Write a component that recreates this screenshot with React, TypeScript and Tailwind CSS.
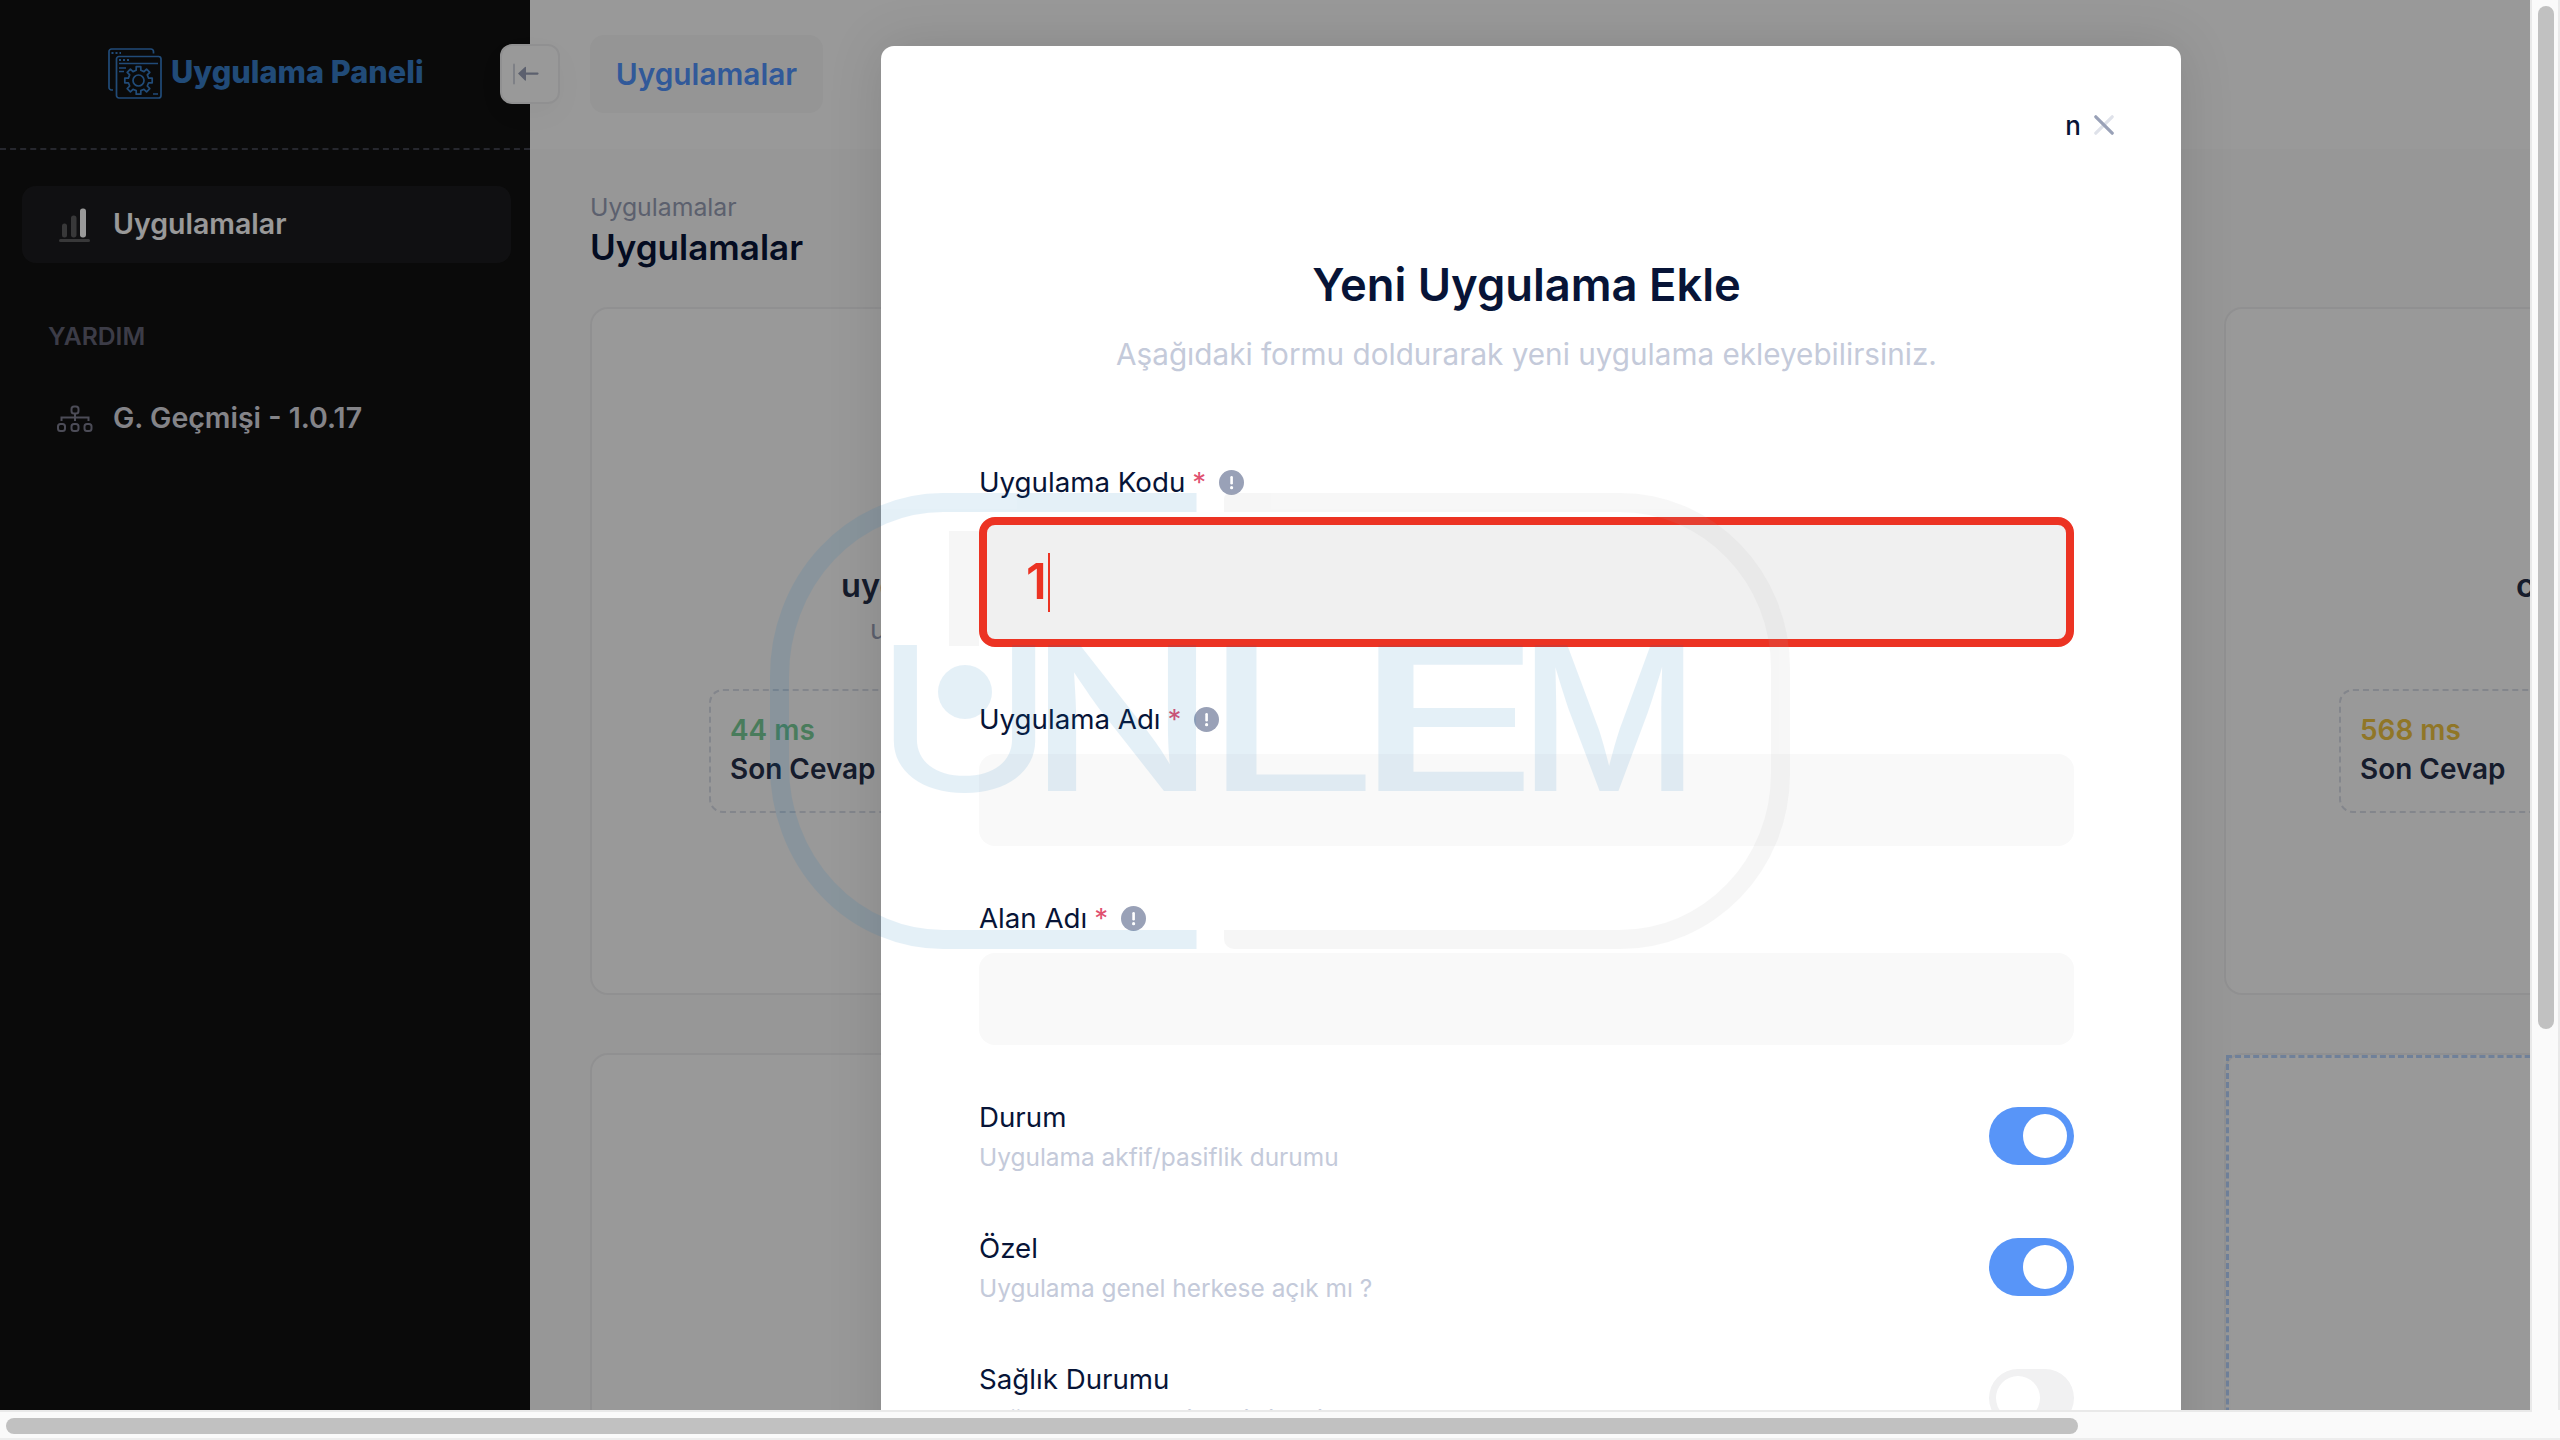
import React from "react";

function LogoIcon() {
  return (
    <svg width="54" height="51" viewBox="0 0 54 51" fill="none" stroke="#377ec9" strokeWidth="1.7" className="shrink-0">
      <path d="M5 42H3.500A2.500 2.500 0 0 1 1 39.500V3.500A2.500 2.500 0 0 1 3.500 1H43A2.500 2.500 0 0 1 45.500 3.500V5.500" />
      <rect x="8.500" y="8.500" width="44.500" height="41.500" rx="2.500" />
      <path d="M3.500 5H13" strokeDasharray="2 2" strokeWidth="2" />
      <path d="M11 12H21" strokeDasharray="2 2" strokeWidth="2" />
      <path d="M11 15.500H50M11 20H18M11 23.500H16M45 46H50" />
      <circle cx="30.500" cy="32.500" r="5.500" />
      <path strokeLinejoin="round" d="M28.200 18.700h4.600v3.600l3.200 1.300 2.600-2.500 3.200 3.200-2.500 2.600 1.300 3.200h3.600v4.700h-3.600l-1.300 3.200 2.500 2.600-3.200 3.200-2.600-2.500-3.200 1.300v3.600h-4.600v-3.600l-3.200-1.300-2.600 2.500-3.200-3.200 2.500-2.600-1.300-3.200h-3.600v-4.700h3.600l1.300-3.200-2.500-2.600 3.200-3.200 2.600 2.500 3.200-1.300z" />
    </svg>
  );
}

function Sidebar() {
  return (
    <aside className="flex h-full w-[530px] shrink-0 flex-col bg-[#111111]">
      <div className="flex h-[150px] items-start border-b-2 border-dashed border-[#40414d] pl-[108px] pt-[48px]">
        <LogoIcon />
        <span className="ml-[9px] mt-[5px] text-[30.700px] font-extrabold leading-[38px] text-[#377ec9]">Uygulama Paneli</span>
      </div>
      <nav className="flex flex-col px-[22px] pt-[36px]">
        <a className="flex h-[77px] w-[489px] items-center rounded-[14px] bg-[#1c1c1f] pl-[37px]">
          <svg width="32" height="34" viewBox="0 0 32 34">
            <rect x="3" y="15.500" width="5" height="14" rx="2.500" fill="#5e5e60" />
            <rect x="12" y="7.500" width="5.500" height="22" rx="2.700" fill="#5e5e60" />
            <rect x="21" y="0.500" width="6" height="29" rx="2.700" fill="#ffffff" />
            <rect x="0" y="31" width="31" height="3" rx="1.500" fill="#5e5e60" />
          </svg>
          <span className="ml-[22px] text-[28.500px] font-semibold text-white">Uygulamalar</span>
        </a>
        <div className="mt-[55px] pl-[26px] text-[24.700px] font-semibold leading-[37px] text-[#646477]">YARDIM</div>
        <a className="mt-[25px] flex h-[77px] items-center pl-[35px]">
          <svg width="36" height="28" viewBox="0 0 36 28" fill="none" stroke="#7f7f92" strokeWidth="2">
            <rect x="14.500" y="1.500" width="7" height="7" rx="2.500" />
            <rect x="1" y="19" width="7" height="7" rx="2.500" />
            <rect x="14.500" y="19" width="7" height="7" rx="2.500" />
            <rect x="27.500" y="19" width="7" height="7" rx="2.500" />
            <path d="M4.500 16v-3.500h27V16M18 9v7" />
          </svg>
          <span className="ml-[20px] text-[28.500px] font-semibold text-[#dcdce3]">G. Geçmişi - 1.0.17</span>
        </a>
      </nav>
    </aside>
  );
}

type CardProps = { title: string; titleClass: string; code: string; ms: string; tone: string; boxClass: string };

function AppCard({ title, titleClass, code, ms, tone, boxClass }: CardProps) {
  return (
    <div className="flex h-[688px] w-[716px] shrink-0 flex-col rounded-[18px] border-2 border-[#f1f1f2] bg-white pt-[253px]">
      <div className={"flex h-[48px] items-center whitespace-nowrap text-[32.500px] font-semibold text-[#252f4a] " + titleClass}>{title}</div>
      <div className="ml-[278px] flex h-[40px] items-center whitespace-nowrap text-[27px] text-[#99a1b7]">{code}</div>
      <div className={"mt-[39px] flex " + boxClass}>
        <div className="flex h-[124px] w-[230px] flex-col rounded-[14px] border-2 border-dashed border-[#dbdfe9] pl-[19px] pt-[20px]">
          <span className={"text-[27.950px] font-semibold leading-[39px] " + tone}>{ms}</span>
          <span className="whitespace-nowrap text-[27.950px] font-semibold leading-[39px] text-[#252f4a]">Son Cevap</span>
        </div>
      </div>
    </div>
  );
}

function Page() {
  return (
    <div className="relative flex h-full w-full">
      <Sidebar />
      <div className="absolute left-[500px] top-[44px] z-10 flex h-[60px] w-[60px] items-center rounded-[12px] border-2 border-[#f1f1f2] bg-white pl-[11px] shadow-[0_10px_30px_rgba(0,0,0,0.03)]">
        <svg width="26" height="22" viewBox="0 0 26 22">
          <rect x="0" y="0.500" width="2" height="21" rx="1" fill="#d3d6e0" />
          <path d="M5 10.500L12 4q1-.5 1 .5V9.500h11.500a1 1 0 0 1 0 2.200H13V17q0 1-1 .5z" fill="#99a1b7" />
        </svg>
      </div>
      <div className="flex min-w-0 flex-1 flex-col overflow-hidden bg-[#fcfcfc]">
        <header className="flex h-[149px] shrink-0 bg-white pl-[60px] pt-[35px]">
          <div className="flex h-[78px] w-[233px] items-center justify-center rounded-[14px] bg-[#f9f9f9] text-[29.800px] font-semibold text-[#5395ff]">Uygulamalar</div>
        </header>
        <div className="flex flex-col pl-[60px] pt-[40px]">
          <div className="text-[24.800px] leading-[36px] text-[#99a1b7]">Uygulamalar</div>
          <div className="text-[35px] font-semibold leading-[44px] text-[#071437]">Uygulamalar</div>
          <div className="mt-[38px] grid grid-cols-[716px_716px] gap-x-[918px] gap-y-[58px]">
            <AppCard title="uygulama" titleClass="pl-[249px]" code="uygulama" ms="44 ms" tone="text-[#7bcf99]" boxClass="pl-[117px]" />
            <AppCard title="c" titleClass="pl-[290px]" code="" ms="568 ms" tone="text-[#f0c541]" boxClass="pl-[113px]" />
            <div className="h-[688px] rounded-[18px] border-2 border-[#f1f1f2] bg-white" />
            <div className="h-[688px] rounded-[18px] border-2 border-[#f1f1f2] bg-white">
              <div className="h-full w-full border-[3px] border-dashed border-[#b9d5ff]" />
            </div>
          </div>
        </div>
      </div>
    </div>
  );
}

function InfoIcon() {
  return (
    <svg width="25" height="25" viewBox="0 0 25 25" className="-mt-[1px] ml-[13px]">
      <circle cx="12.500" cy="12.500" r="12.500" fill="#99a1b7" />
      <rect x="11.300" y="6" width="2.600" height="8.500" rx="1.300" fill="#fff" />
      <circle cx="12.600" cy="17.700" r="1.600" fill="#fff" />
    </svg>
  );
}

function FieldLabel({ text }: { text: string }) {
  return (
    <div className="flex h-[42px] items-center text-[27.700px] text-[#071437]">
      {text}
      <span className="ml-[7px] text-[#e0506f]">*</span>
      <InfoIcon />
    </div>
  );
}

function SwitchRow({ title, hint, on }: { title: string; hint: string; on: boolean }) {
  return (
    <div className="flex h-[131px] items-start justify-between">
      <div className="flex flex-col">
        <span className="text-[27.700px] leading-[42px] text-[#071437]">{title}</span>
        <span className="text-[24.450px] leading-[38px] text-[#c4cada]">{hint}</span>
      </div>
      <div className={on ? "mt-[11px] flex h-[58px] w-[85px] items-center justify-end rounded-full bg-[#5895f8] px-[7px]" : "mt-[11px] flex h-[58px] w-[85px] items-center rounded-full bg-[#f1f1f2] px-[7px]"}>
        <div className="h-[44px] w-[44px] rounded-full bg-white" />
      </div>
    </div>
  );
}

function Modal() {
  return (
    <div className="flex h-[1500px] w-[1300px] flex-col rounded-t-[13px] bg-white pl-[98px] pr-[107px] shadow-[0_0_56px_rgba(0,0,0,0.12)]">
      <div className="-mr-[41px] flex h-[160px] items-start justify-end pt-[60px] text-[26px] font-medium leading-[40px] text-[#071437]">
        n
        <svg width="20" height="20" viewBox="0 0 20 20" className="ml-[13px] mr-[1px] mt-[9px]" strokeWidth="3.200" strokeLinecap="round">
          <path d="M18.200 1.800L1.800 18.200" stroke="#dfe2ea" />
          <path d="M1.800 1.800L18.200 18.200" stroke="#99a1b7" />
        </svg>
      </div>
      <h1 className="mt-[51px] text-center text-[45.300px] font-semibold leading-[55px] text-[#071437]">Yeni Uygulama Ekle</h1>
      <p className="mt-[20px] text-center text-[29.700px] leading-[45px] text-[#c4cada]">Aşağıdaki formu doldurarak yeni uygulama ekleyebilirsiniz.</p>
      <div className="mt-[85px]">
        <FieldLabel text="Uygulama Kodu" />
      </div>
      <div className="mt-[13px] flex h-[130px] items-center rounded-[16px] border-8 border-[#ec3323] bg-[#f0f0f0] pl-[39px]">
        <span className="text-[49px] font-semibold text-[#ec3323]">1</span>
        <span className="ml-[1px] h-[59px] w-[2px] bg-[#ec3323]" />
      </div>
      <div className="mt-[52px]">
        <FieldLabel text="Uygulama Adı" />
      </div>
      <div className="mt-[13px] h-[92px] rounded-[16px] bg-[#f9f9f9]" />
      <div className="mt-[52px]">
        <FieldLabel text="Alan Adı" />
      </div>
      <div className="mt-[13px] h-[92px] rounded-[16px] bg-[#f9f9f9]" />
      <div className="mt-[51px] flex flex-col">
        <SwitchRow title="Durum" hint="Uygulama akfif/pasiflik durumu" on />
        <SwitchRow title="Özel" hint="Uygulama genel herkese açık mı ?" on />
        <SwitchRow title="Sağlık Durumu" hint="Sağlık durumu takip edilsin mi ?" on={false} />
      </div>
    </div>
  );
}

function Watermark() {
  return (
    <svg className="pointer-events-none absolute left-[760px] top-[480px]" width="1040" height="480" viewBox="760 480 1040 480">
      <g opacity="0.1">
        <path d="M1196.500 502.500H943A163.500 173.500 0 0 0 779.500 676V766A163.500 173.500 0 0 0 943 939.500H1196.500" fill="none" stroke="#0573b9" strokeWidth="19" />
        <path d="M1230 493H1620A170 175 0 0 1 1790 668V774A170 175 0 0 1 1620 949H1234A10 10 0 0 1 1224 939V930H1620A151 156 0 0 0 1771 774V668A151 156 0 0 0 1620 512H1224V499A6 6 0 0 1 1230 493Z" fill="#aeaeae" />
        <rect x="949" y="531" width="30" height="115" fill="#aeaeae" />
        <g fill="#0573b9" fontFamily="Inter" fontSize="200">
          <text x="872" y="791" textLength="185" lengthAdjust="spacingAndGlyphs" fontWeight="400">U</text>
          <text x="1028" y="791" textLength="188" lengthAdjust="spacingAndGlyphs" fontWeight="500">N</text>
          <text x="1198" y="791" textLength="183" lengthAdjust="spacingAndGlyphs" fontWeight="400">L</text>
          <text x="1353" y="791" textLength="190" lengthAdjust="spacingAndGlyphs" fontWeight="500">E</text>
          <text x="1519" y="791" textLength="180" lengthAdjust="spacingAndGlyphs" fontWeight="500">M</text>
          <circle cx="965" cy="692" r="27" />
        </g>
      </g>
    </svg>
  );
}

export default function App() {
  return (
    <div className="flex h-[1440px] w-[2560px] flex-col overflow-hidden bg-[#fafafa] font-['Inter',sans-serif]">
      <div className="flex h-[1410px]">
        <div className="relative h-[1410px] w-[2530px] overflow-hidden">
          <Page />
          <div className="absolute inset-0 z-20 flex items-start bg-black/40 pl-[881px] pt-[46px]">
            <Modal />
          </div>
          <div className="absolute inset-0 z-30">
            <Watermark />
          </div>
        </div>
        <div className="w-[30px] border-l-2 border-r-2 border-[#e9e9e9] pl-[6px] pt-[6px]">
          <div className="h-[1023px] w-[16px] rounded-full bg-[#c1c1c1]" />
        </div>
      </div>
      <div className="flex h-[30px] flex-col">
        <div className="h-[2px] w-[2532px] bg-[#e9e9e9]" />
        <div className="ml-[6px] mt-[6px] h-[16px] w-[2072px] rounded-full bg-[#c1c1c1]" />
        <div className="mt-[4px] h-[2px] bg-[#ededed]" />
      </div>
    </div>
  );
}
